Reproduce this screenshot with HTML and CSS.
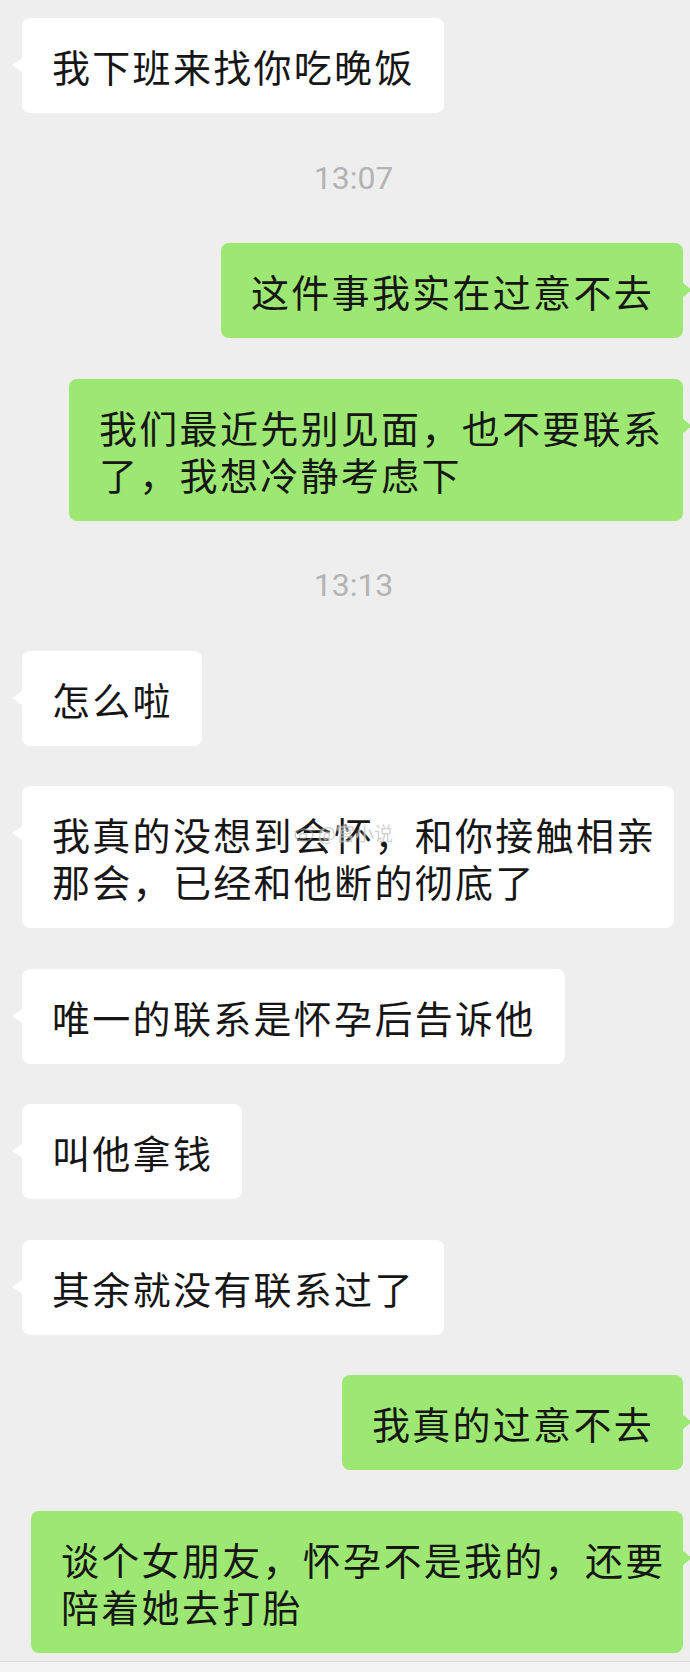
FILE: index.html
```html
<!DOCTYPE html>
<html lang="zh-CN">
<head>
  <meta charset="UTF-8" />
  <meta name="viewport" content="width=device-width, initial-scale=1.0"/>
  <title>聊天记录</title>
  <link rel="stylesheet" href="styles.css">
</head>
<body>

  <div class="chat">
    <div class="row left">
      <div class="bubble">我下班来找你吃晚饭</div>
    </div>

    <div class="time">13:07</div>

    <div class="row right">
      <div class="bubble">这件事我实在过意不去</div>
    </div>
    <div class="row right">
      <div class="bubble multi narrow">我们最近先别见面，也不要联系了，我想冷静考虑下</div>
    </div>

    <div class="time">13:13</div>

    <div class="row left">
      <div class="bubble">怎么啦</div>
    </div>
    <div class="row left">
      <div class="bubble multi">我真的没想到会怀，和你接触相亲那会，已经和他断的彻底了
        <span class="watermark">
          <svg width="22" height="18" viewBox="0 0 22 18">
            <ellipse cx="10" cy="11" rx="9" ry="6" fill="none" stroke="currentColor" stroke-width="1.6"/>
            <ellipse cx="9" cy="12" rx="3.5" ry="2.5" fill="none" stroke="currentColor" stroke-width="1.4"/>
            <path d="M15 2 a5 5 0 0 1 5 5" fill="none" stroke="currentColor" stroke-width="1.4"/>
          </svg>@宫小说
        </span>
      </div>
    </div>
    <div class="row left">
      <div class="bubble">唯一的联系是怀孕后告诉他</div>
    </div>
    <div class="row left">
      <div class="bubble">叫他拿钱</div>
    </div>
    <div class="row left">
      <div class="bubble">其余就没有联系过了</div>
    </div>
    <div class="row right">
      <div class="bubble">我真的过意不去</div>
    </div>
    <div class="row right">
      <div class="bubble multi">谈个女朋友，怀孕不是我的，还要陪着她去打胎</div>
    </div>
  </div>

  <div class="bottom-bar"></div>

</body>
</html>
```

FILE: styles.css
```css
body {
  margin: 0;
  background-color: #eeeeee;
  font-family: "Noto Sans CJK SC", "Noto Sans", sans-serif;
  color: #161616;
  overflow: hidden;
}

.chat {
  display: flex;
  flex-direction: column;
  gap: 40.5px;
  padding-top: 18px;
  height: 1643px;
}

.row {
  display: flex;
}

.row.left {
  justify-content: flex-start;
  padding-left: 22px;
}

.row.right {
  justify-content: flex-end;
  padding-right: 7px;
}

.bubble {
  position: relative;
  max-width: 652px;
  box-sizing: border-box;
  padding: 24px 29px 24px 30px;
  font-size: 38px;
  letter-spacing: 2.3px;
  line-height: 47px;
  border-radius: 8px;
  background-color: #ffffff;
}

.bubble.multi {
  padding-right: 17px;
}

.bubble.narrow {
  max-width: 614px;
}

/* little arrow pointing at the sender */
.bubble::before {
  content: "";
  position: absolute;
  top: 40px;
  border-top: 7px solid transparent;
  border-bottom: 7px solid transparent;
}

.left .bubble::before {
  left: -10px;
  border-right: 10px solid #ffffff;
}

.right .bubble {
  background-color: #9de873;
}

.right .bubble::before {
  right: -9px;
  border-left: 9px solid #9de873;
}

.time {
  height: 49px;
  line-height: 49px;
  padding-left: 17px;
  text-align: center;
  font-family: Roboto, "Liberation Sans", sans-serif;
  font-size: 32px;
  color: #b3b3b3;
}

.watermark {
  position: absolute;
  left: 272px;
  top: 36px;
  display: flex;
  align-items: center;
  gap: 2px;
  font-size: 19px;
  letter-spacing: 0;
  line-height: 22px;
  color: rgba(170, 170, 170, 0.55);
  text-shadow: 0 0 2px rgba(255, 255, 255, 0.9);
}

.bottom-bar {
  border-top: 1px solid #dddddd;
  background-color: #f3f3f3;
  height: 12px;
}
```
